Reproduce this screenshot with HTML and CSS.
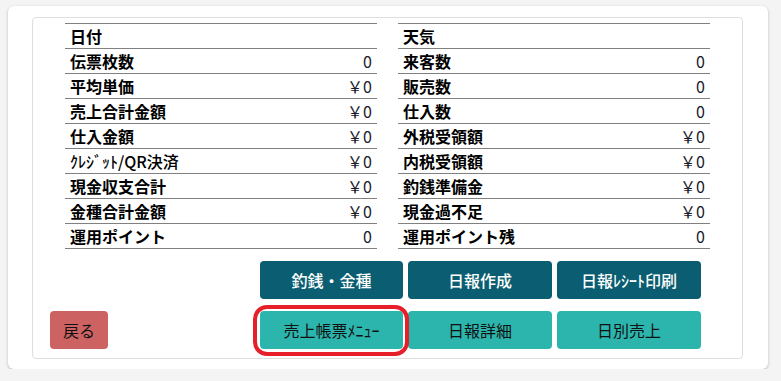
FILE: index.html
```html
<!DOCTYPE html>
<html lang="ja">
<head>
  <meta charset="UTF-8">
  <meta name="viewport" content="width=device-width, initial-scale=1.0">
  <title>日報メニュー</title>
  <link rel="stylesheet" href="styles.css">
</head>
<body>
  <div class="panel">
    <div class="card">
      <div class="tables">
        <table class="summary">
          <tr><th>日付</th><td></td></tr>
          <tr><th>伝票枚数</th><td>0</td></tr>
          <tr><th>平均単価</th><td>￥0</td></tr>
          <tr><th>売上合計金額</th><td>￥0</td></tr>
          <tr><th>仕入金額</th><td>￥0</td></tr>
          <tr><th class="thin">ｸﾚｼﾞｯﾄ/QR決済</th><td>￥0</td></tr>
          <tr><th>現金収支合計</th><td>￥0</td></tr>
          <tr><th>金種合計金額</th><td>￥0</td></tr>
          <tr><th>運用ポイント</th><td>0</td></tr>
        </table>
        <table class="summary">
          <tr><th>天気</th><td></td></tr>
          <tr><th>来客数</th><td>0</td></tr>
          <tr><th>販売数</th><td>0</td></tr>
          <tr><th>仕入数</th><td>0</td></tr>
          <tr><th>外税受領額</th><td>￥0</td></tr>
          <tr><th>内税受領額</th><td>￥0</td></tr>
          <tr><th>釣銭準備金</th><td>￥0</td></tr>
          <tr><th>現金過不足</th><td>￥0</td></tr>
          <tr><th>運用ポイント残</th><td>0</td></tr>
        </table>
      </div>

      <div class="actions">
        <button class="btn btn-dark row1 c3">釣銭・金種</button>
        <button class="btn btn-dark row1 c4">日報作成</button>
        <button class="btn btn-dark row1 c5">日報ﾚｼｰﾄ印刷</button>

        <button class="btn btn-back row2 c1">戻る</button>
        <div class="marked row2 c3">
          <button class="btn btn-light">売上帳票ﾒﾆｭｰ</button>
          <span class="ring"></span>
        </div>
        <button class="btn btn-light row2 c4">日報詳細</button>
        <button class="btn btn-light row2 c5">日別売上</button>
      </div>
    </div>
  </div>
</body>
</html>
```

FILE: styles.css
```css
body {
  margin: 0;
  background-color: #f4f4f4;
  font-family: "Noto Sans CJK JP", "Noto Sans", sans-serif;
}
.panel {
  width: 760px;
  height: 363px;
  margin: 6px 0 0 8px;
  padding: 11px 0 0 24px;
  box-sizing: border-box;
  background-color: #fff;
  border-radius: 6px;
  box-shadow: 0 1px 3px rgba(0, 0, 0, 0.25);
}
.card {
  width: 711px;
  height: 342px;
  box-sizing: border-box;
  border: 1px solid #dedede;
  border-radius: 4px;
  padding: 5px 0 0 17px;
}
.tables {
  display: flex;
  gap: 21px;
  margin-left: 15px;
}
table.summary {
  width: 312px;
  border-collapse: collapse;
  border-top: 1px solid #808080;
}
.summary th,
.summary td {
  height: 24px;
  padding: 0 5px;
  border-bottom: 1px solid #808080;
  font-size: 16px;
  line-height: 24px;
}
.summary th {
  text-align: left;
  font-weight: bold;
  color: #000;
}
.summary th.thin {
  font-weight: 500;
}
.summary td {
  text-align: right;
  color: #1a1a2a;
  font-weight: normal;
}
.actions {
  display: grid;
  grid-template-columns: 58px 1fr 143px 144px 144px;
  grid-template-rows: 38px 38px;
  column-gap: 5px;
  row-gap: 12px;
  width: 651px;
  margin-top: 12px;
}
.row1 { grid-row: 1; }
.row2 { grid-row: 2; }
.c1 { grid-column: 1; }
.c3 { grid-column: 3; }
.c4 { grid-column: 4; }
.c5 { grid-column: 5; }
.btn {
  border: none;
  border-radius: 4px;
  font-family: inherit;
  font-size: 16px;
  padding: 0;
  cursor: pointer;
}
.btn-dark {
  background-color: #0b5e71;
  color: #fff;
  font-weight: 500;
}
.btn-light {
  background-color: #2cb5ad;
  color: #111;
}
.btn-back {
  background-color: #cd6262;
  color: #111;
}
.marked {
  position: relative;
  display: flex;
}
.marked .btn {
  flex: 1;
}
.ring {
  position: absolute;
  left: -7px;
  top: -6px;
  right: -6px;
  bottom: -7px;
  border: 4px solid #e61f2a;
  border-radius: 14px;
  pointer-events: none;
}
```
